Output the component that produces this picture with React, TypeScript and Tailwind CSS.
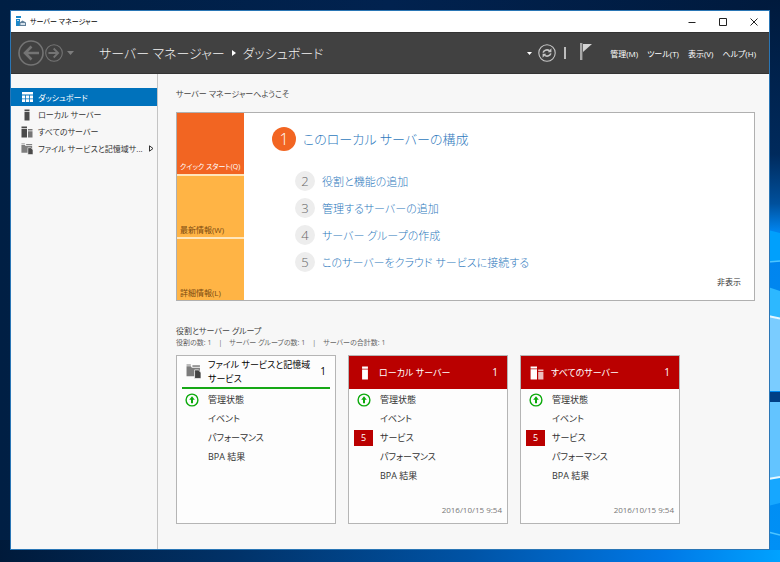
import React from 'react';
import { clsx } from 'clsx';

type IconProps = { className?: string };

interface ServerCard {
  id: string;
  title: string;
  count: number;
  alert: boolean;
  icon: React.FC<IconProps>;
  serviceErrors?: number;
  timestamp?: string;
}

/* Icons */
const AppIcon: React.FC<IconProps> = ({ className }) => (
  <svg viewBox="0 0 10 11" className={className} aria-hidden="true">
    <path d="M0 0h5v2H0zM0 3h4v7H0z" fill="#1b87c9" />
    <path d="M1 4h2v1H1z" fill="#bfe0f5" />
    <path d="M3.5 6.5 6.5 4.5 10 6.5V10H3.5z" fill="#5f7f98" />
    <path d="M4.5 7H9v2H4.5z" fill="#d6e2ec" />
  </svg>
);

const DashboardIcon: React.FC<IconProps> = ({ className }) => (
  <svg viewBox="0 0 12 12" className={className} fill="currentColor" aria-hidden="true">
    <path d="M1 1h11v2.6H1zM1 4.4h3v3H1zM4.8 4.4H8v3H4.8zM8.8 4.4H12v3H8.8zM1 8.2h3V11H1zM4.8 8.2H8V11H4.8zM8.8 8.2H12V11H8.8z" />
  </svg>
);

const LocalServerIcon: React.FC<IconProps> = ({ className }) => (
  <svg viewBox="0 0 12 12" className={className} fill="currentColor" aria-hidden="true">
    <path d="M3.5 0.5h5v1.8h-5zM3.5 3h5v8.5h-5z" />
  </svg>
);

const AllServersIcon: React.FC<IconProps> = ({ className }) => (
  <svg viewBox="0 0 12 12" className={className} fill="currentColor" aria-hidden="true">
    <path d="M0.5 0.5H6v1.6H0.5zM0.5 2.8H6v8.7H0.5z" />
    <path d="M7 3h4.5v1.4H7zM7 5.2h4.5v6.3H7z" opacity="0.75" />
  </svg>
);

const FileServicesIcon: React.FC<IconProps> = ({ className }) => (
  <svg viewBox="0 0 14 14" className={className} fill="currentColor" aria-hidden="true">
    <path d="M0.5 0.5h4v1h-4zM0.5 2.2h4l1 1.3H13v4H8v4H0.5z" opacity="0.7" />
    <path d="M6 1.2h7v1.4H6z" opacity="0.7" />
    <path d="M8 5.5h3.5L14 8v5.5H8z" stroke="#f7f7f7" strokeWidth="0.7" />
  </svg>
);

const StatusUpIcon: React.FC<IconProps> = ({ className }) => (
  <svg viewBox="0 0 14 14" className={className} fill="none" stroke="#0caa0c" aria-hidden="true">
    <circle cx="7" cy="7" r="5.9" strokeWidth="1.4" />
    <path d="M7 10.3V5" strokeWidth="2" />
    <path d="M7 3.2 9.8 6.8H4.2z" fill="#0caa0c" stroke="none" />
  </svg>
);

const FlagIcon: React.FC<IconProps> = ({ className }) => (
  <svg viewBox="0 0 12 17" className={className} aria-hidden="true">
    <path d="M0 0h2.4v17H0z" fill="#a9a9a9" />
    <path d="M3 1h9L3 9z" fill="#d4d4d4" />
  </svg>
);

const RefreshIcon: React.FC<IconProps> = ({ className }) => (
  <svg viewBox="0 0 18 18" className={className} fill="none" stroke="#c6c6c6" aria-hidden="true">
    <circle cx="9" cy="9" r="8.2" strokeWidth="1.1" />
    <path d="M5.2 8.6C5.5 6.4 8.6 5 11.6 6.6M12.8 9.4c-.3 2.2-3.4 3.6-6.4 2" strokeWidth="1.6" />
    <path d="M13.4 4.2v4H9.7zM4.6 13.8v-4h3.7z" fill="#c6c6c6" stroke="none" />
  </svg>
);

const ArrowCircle: React.FC<IconProps & { back?: boolean }> = ({ className, back }) => (
  <svg viewBox="0 0 26 26" className={clsx(className, !back && 'rotate-180')} fill="none" stroke="#747474" aria-hidden="true">
    <circle cx="13" cy="13" r="12" strokeWidth="1.6" />
    <path d="M21 13H7.5M13.5 6.5 7 13l6.5 6.5" strokeWidth="2.6" />
  </svg>
);

/* Desktop behind the window */
const Wallpaper: React.FC = () => (
  <svg
    viewBox="0 0 780 562"
    preserveAspectRatio="none"
    className="absolute inset-0 -z-10 h-full w-full"
    aria-hidden="true"
  >
    <defs>
      <linearGradient id="base">
        <stop offset="0" stopColor="#001f44" />
        <stop offset="0.5" stopColor="#01224f" />
        <stop offset="1" stopColor="#001a3d" />
      </linearGradient>
      <linearGradient id="floor">
        <stop offset="0" stopColor="#001a3a" />
        <stop offset="0.3" stopColor="#013268" />
        <stop offset="0.6" stopColor="#0053a5" />
        <stop offset="0.85" stopColor="#0078e6" />
        <stop offset="1" stopColor="#00a2ff" />
      </linearGradient>
      <linearGradient id="side" x2="0" y2="1">
        <stop offset="0" stopColor="#001a3d" />
        <stop offset="0.28" stopColor="#002a5c" />
        <stop offset="0.37" stopColor="#00509c" />
        <stop offset="0.42" stopColor="#0084ee" />
        <stop offset="1" stopColor="#0090f5" />
      </linearGradient>
    </defs>
    <path d="M0 0h780v562H0z" fill="url(#base)" />
    <path d="M0 540h780v22H0z" fill="url(#floor)" />
    <path d="M768 0h12v550h-12z" fill="url(#side)" />
    <path d="M768 230l12 3v29l-12-1z" fill="#00a0fc" />
    <path d="M768 287l12 4v28l-12-3z" fill="#2db8ff" />
    <path d="M768 316l12 3v72h-12z" fill="#7accff" />
    <path d="M768 402h12v75l-12 2z" fill="#63c4ff" />
    <path d="M768 479l12-2v26l-12 3z" fill="#16a7ff" />
    <path d="M768 316l12 2.5M768 479l12-2" stroke="#e6f7ff" strokeWidth="2" />
    <path d="M768 262l12-1M768 532l12 3" stroke="#4cc4ff" strokeWidth="1.5" />
    <path d="M768 392h12v10h-12z" fill="#003f86" />
  </svg>
);

const navItems = [
  { label: 'ダッシュボード', icon: DashboardIcon, active: true },
  { label: 'ローカル サーバー', icon: LocalServerIcon },
  { label: 'すべてのサーバー', icon: AllServersIcon },
  { label: 'ファイル サービスと記憶域サ...', icon: FileServicesIcon, expandable: true },
];

const menuItems = ['管理(M)', 'ツール(T)', '表示(V)', 'ヘルプ(H)'];

const steps = [
  '役割と機能の追加',
  '管理するサーバーの追加',
  'サーバー グループの作成',
  'このサーバーをクラウド サービスに接続する',
];

const cards: ServerCard[] = [
  { id: 'files', title: 'ファイル サービスと記憶域\nサービス', count: 1, alert: false, icon: FileServicesIcon },
  { id: 'local', title: 'ローカル サーバー', count: 1, alert: true, icon: LocalServerIcon, serviceErrors: 5, timestamp: '2016/10/15 9:54' },
  { id: 'all', title: 'すべてのサーバー', count: 1, alert: true, icon: AllServersIcon, serviceErrors: 5, timestamp: '2016/10/15 9:54' },
];

const TitleBar: React.FC = () => (
  <div className="flex h-[21px] items-center bg-white pl-[5px] text-[7px] text-black">
    <AppIcon className="mr-1 h-[11px] w-[10px]" />
    <span className="flex-1">サーバー マネージャー</span>
    <button aria-label="最小化" className="flex h-full w-[31px] items-center justify-center">
      <svg viewBox="0 0 8 8" className="size-2" stroke="#222"><path d="M0.5 4.5h7" /></svg>
    </button>
    <button aria-label="最大化" className="flex h-full w-[31px] items-center justify-center">
      <svg viewBox="0 0 8 8" className="size-2" fill="none" stroke="#222"><path d="M0.5 0.5h7v7h-7z" /></svg>
    </button>
    <button aria-label="閉じる" className="flex h-full w-[31px] items-center justify-center">
      <svg viewBox="0 0 8 8" className="size-2" stroke="#222"><path d="M0.5 0.5l7 7M7.5 0.5l-7 7" /></svg>
    </button>
  </div>
);

const Header: React.FC = () => (
  <header className="flex h-[42px] items-center border-y border-[#333] bg-[#414141] pr-[13px] pl-[7px] text-white">
    <button aria-label="戻る"><ArrowCircle back className="size-[26px]" /></button>
    <button aria-label="進む"><ArrowCircle className="ml-[1px] size-[18px]" /></button>
    <svg viewBox="0 0 7 4" className="ml-1 h-1 w-[7px]" fill="#7d7d7d"><path d="M0 0h7L3.5 4z" /></svg>
    <h1 className="ml-[25px] flex flex-1 items-center gap-[7px] text-[13px] font-light text-[#f2f2f2]">
      <span>サーバー マネージャー</span>
      <svg viewBox="0 0 4 6" className="h-[6px] w-1" fill="#fff"><path d="M0 0v6l4-3z" /></svg>
      <span>ダッシュボード</span>
    </h1>
    <svg viewBox="0 0 5 3" className="h-[3px] w-[5px]" fill="#fff"><path d="M0 0h5L2.5 3z" /></svg>
    <button aria-label="最新の情報に更新" className="ml-[6px]"><RefreshIcon className="size-[18px]" /></button>
    <span className="ml-2 h-3 w-[2px] bg-[#bdbdbd]"></span>
    <button aria-label="通知" className="ml-[14px] pb-[3px]"><FlagIcon className="h-[17px] w-3" /></button>
    <nav className="ml-[18px] flex gap-[9px] text-[8px]">
      {menuItems.map((item) => (
        <button key={item}>{item}</button>
      ))}
    </nav>
  </header>
);

const Sidebar: React.FC = () => (
  <nav className="w-[147px] shrink-0 border-r border-[#c4c4c4] pt-[14px] text-[8px]">
    {navItems.map(({ label, icon: Icon, active, expandable }) => (
      <a
        key={label}
        href="#"
        className={clsx('flex items-center pl-[10px] whitespace-nowrap', active ? 'h-[18px] bg-[#0072bc] text-white' : 'h-[17px] text-[#333]')}
      >
        <Icon className={clsx('mr-[5px] size-3 shrink-0', !active && 'text-[#4a4a4a]')} />
        <span className="flex-1">{label}</span>
        {expandable && (
          <svg viewBox="0 0 5 7" className="mr-[3px] h-[7px] w-[5px]" fill="none" stroke="#333"><path d="M0.5 0.8v5.4L4 3.5z" /></svg>
        )}
      </a>
    ))}
  </nav>
);

const WelcomePanel: React.FC = () => (
  <section className="flex border border-[#b0b0b0] bg-white">
    <div className="flex w-[67px] shrink-0 flex-col gap-[2px] bg-[#ffe6bd] text-[8px]">
      <button className="flex h-[61px] items-end bg-[#f26522] pb-[1px] pl-[3px] text-[7px] whitespace-nowrap text-white">クイック スタート(Q)</button>
      <button className="flex h-[61px] items-end bg-[#ffb445] pb-[1px] pl-[3px] text-[#7a4a10]">最新情報(W)</button>
      <button className="flex h-[61px] items-end bg-[#ffb445] pb-[1px] pl-[3px] text-[#7a4a10]">詳細情報(L)</button>
    </div>
    <div className="relative flex-1 pt-[14px] pl-7">
      <a href="#" className="flex h-6 items-center gap-[7px] text-[13px] font-light text-[#2e79bd]">
        <span className="flex size-6 items-center justify-center rounded-full bg-[#f26522] text-base text-white">1</span>
        このローカル サーバーの構成
      </a>
      <ol className="mt-5 pl-[23px]">
        {steps.map((step, i) => (
          <li key={step} className="h-[27px]">
            <a href="#" className="flex h-5 items-center gap-[7px] text-[11px] font-light text-[#2e79bd]">
              <span className="flex size-5 items-center justify-center rounded-full bg-[#ededed] text-[13px] text-[#666]">{i + 2}</span>
              {step}
            </a>
          </li>
        ))}
      </ol>
      <button className="absolute right-[13px] bottom-3 text-[8px] text-[#333]">非表示</button>
    </div>
  </section>
);

const GroupCard: React.FC<{ card: ServerCard }> = ({ card }) => {
  const Icon = card.icon;
  const rows = ['管理状態', 'イベント', ...(card.serviceErrors ? ['サービス'] : []), 'パフォーマンス', 'BPA 結果'];

  return (
    <article className="flex min-h-[169px] w-40 flex-col border border-[#b5b5b5] bg-[#fdfdfd] text-[9px] text-[#333]">
      <h3
        className={clsx(
          'mb-[1px] flex h-[33px] items-center',
          card.alert ? 'bg-[#ba0000] px-[9px] text-white' : 'mx-[5px] border-b-2 border-[#16a816] px-1 text-black'
        )}
      >
        <Icon className={clsx('mr-[7px] shrink-0', card.alert ? 'size-[14px]' : 'size-[15px] text-[#444]')} />
        <span className="flex-1 leading-[14px] whitespace-pre">{card.title}</span>
        <span className="text-[10px]">{card.count}</span>
      </h3>
      <ul>
        {rows.map((row) => (
          <li key={row} className="flex h-[19px] items-center">
            <span className="flex w-[31px] shrink-0 items-center pl-[5px]">
              {row === '管理状態' && <StatusUpIcon className="ml-[3px] size-[14px]" />}
              {row === 'サービス' && (
                <span className="flex h-4 w-[19px] items-center justify-center bg-[#ba0000] text-white">{card.serviceErrors}</span>
              )}
            </span>
            <a href="#">{row}</a>
          </li>
        ))}
      </ul>
      {card.timestamp && <time className="mt-auto pr-[5px] pb-[7px] text-right text-[8px] text-[#777]">{card.timestamp}</time>}
    </article>
  );
};

const App: React.FC = () => {
  return (
    <div
      lang="ja"
      className="relative isolate flex min-h-screen px-[10px] pt-[10px] pb-3 font-['Open_Sans','Noto_Sans_CJK_JP',sans-serif] leading-[13px] [font-feature-settings:'palt']"
    >
      <Wallpaper />
      <div className="flex flex-1 flex-col border border-[#2a76b5] bg-[#f7f7f7]">
        <TitleBar />
        <Header />
        <div className="flex flex-1">
          <Sidebar />
          <main className="min-w-0 flex-1 pt-[13px] pr-[14px] pb-6 pl-[18px]">
            <h2 className="mb-3 text-[8px] text-[#444]">サーバー マネージャーへようこそ</h2>
            <WelcomePanel />
            <h2 className="mt-[23px] text-[8px] text-[#444]">役割とサーバー グループ</h2>
            <p className="flex gap-[7px] text-[7px] leading-3 text-[#666]">
              <span>役割の数: 1</span>
              <span>|</span>
              <span>サーバー グループの数: 1</span>
              <span>|</span>
              <span>サーバーの合計数: 1</span>
            </p>
            <div className="mt-[6px] flex flex-wrap gap-3">
              {cards.map((card) => (
                <GroupCard key={card.id} card={card} />
              ))}
            </div>
          </main>
        </div>
      </div>
    </div>
  );
};

export default App;
